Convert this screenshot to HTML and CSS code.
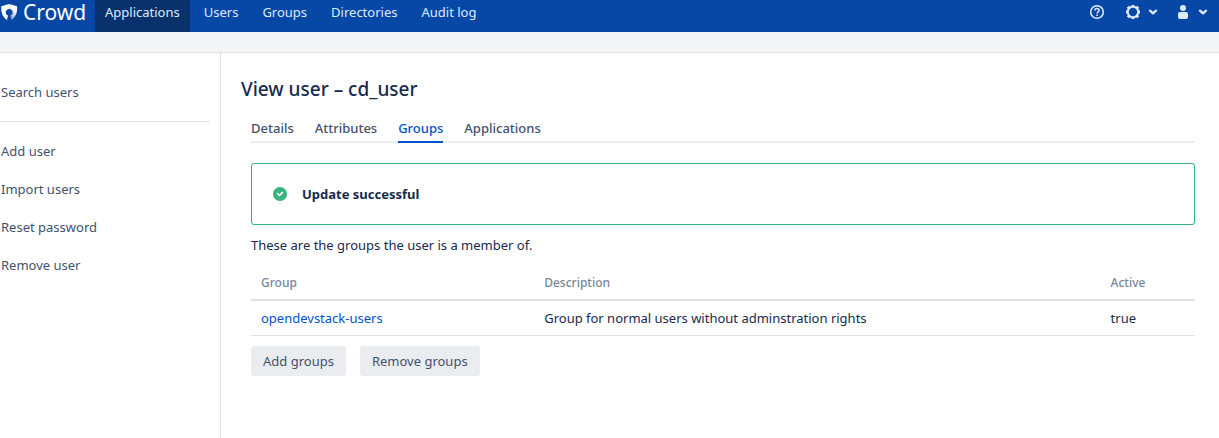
FILE: index.html
```html
<!DOCTYPE html>
<html lang="en">
<head>
<meta charset="utf-8">
<title>View user – cd_user</title>
<link rel="stylesheet" href="styles.css">
</head>
<body>
<header class="topbar">
  <a class="brand" href="#">
    <svg class="brand-icon" width="18" height="18" viewBox="0 0 18 18" aria-hidden="true">
      <defs><linearGradient id="shade" gradientUnits="userSpaceOnUse" x1="15" y1="5" x2="9" y2="14"><stop offset="0.2" stop-color="#fff"/><stop offset="1" stop-color="#7f9fd6"/></linearGradient></defs>
      <path fill="#fff" d="M9.200 1 1.300 3.300C.9 9 2.200 14 7 17L8 12.400C6.600 12.100 5.700 10.900 5.700 9.400 5.700 7.500 7.200 5.900 9.200 5.900Z"/>
      <path fill="url(#shade)" d="M9.200 1l7.900 2.300C17.500 9 16.200 14 11.400 17L10.400 12.400C11.800 12.100 12.700 10.900 12.700 9.400 12.700 7.500 11.200 5.900 9.200 5.900Z"/>
    </svg>
    <span>Crowd</span>
  </a>
  <nav class="mainnav">
    <a class="current" href="#">Applications</a>
    <a href="#">Users</a>
    <a href="#">Groups</a>
    <a href="#">Directories</a>
    <a href="#">Audit log</a>
  </nav>
  <div class="tools">
    <button class="help" type="button" aria-label="Help">
      <svg width="16" height="16" viewBox="0 0 16 16"><circle cx="8" cy="8" r="6.300" fill="none" stroke="currentColor" stroke-width="1.600"/><path d="M5.900 6.600C5.900 5.300 6.800 4.600 8 4.600s2.100.7 2.100 1.800c0 1.400-2 1.500-2 3" fill="none" stroke="currentColor" stroke-width="1.500"/><circle cx="8.100" cy="11.200" r=".9" fill="currentColor"/></svg>
    </button>
    <button type="button" aria-label="Administration">
      <svg width="16" height="16" viewBox="0 0 16 16"><circle cx="8" cy="8" r="5.200" fill="none" stroke="currentColor" stroke-width="2"/><g stroke="currentColor" stroke-width="3"><path d="M8 1v2M8 13v2M1 8h2M13 8h2M2.800 2.800l1.700 1.700M11.500 11.500l1.700 1.700M13.200 2.800l-1.700 1.700M4.500 11.500l-1.700 1.700"/></g></svg>
      <svg width="10" height="8" viewBox="0 0 10 8"><path d="M2 2.700 5 5.300l3-2.600" fill="none" stroke="currentColor" stroke-width="2.400" stroke-linecap="round" stroke-linejoin="round"/></svg>
    </button>
    <button type="button" aria-label="Profile">
      <svg width="16" height="16" viewBox="0 0 16 16"><circle cx="8" cy="4" r="3" fill="currentColor"/><path d="M3 10q0-2 2-2h6q2 0 2 2v3q0 2-2 2H5q-2 0-2-2Z" fill="currentColor"/></svg>
      <svg width="10" height="8" viewBox="0 0 10 8"><path d="M2 2.700 5 5.300l3-2.600" fill="none" stroke="currentColor" stroke-width="2.400" stroke-linecap="round" stroke-linejoin="round"/></svg>
    </button>
  </div>
</header>
<div class="band"></div>
<div class="layout">
  <nav class="sidebar">
    <a href="#">Search users</a>
    <hr>
    <a href="#">Add user</a>
    <a href="#">Import users</a>
    <a href="#">Reset password</a>
    <a href="#">Remove user</a>
  </nav>
  <main class="content">
    <h1>View user – cd_user</h1>
    <div class="panel">
      <nav class="tabs">
        <a href="#">Details</a>
        <a href="#">Attributes</a>
        <a class="active" href="#">Groups</a>
        <a href="#">Applications</a>
      </nav>
      <div class="message" role="status">
        <svg width="14" height="14" viewBox="0 0 14 14" aria-hidden="true"><circle cx="7" cy="7" r="7" fill="#36b37e"/><path d="M4.600 6.700 6.500 8.500 9.500 5.300" fill="none" stroke="#fff" stroke-width="1.700" stroke-linecap="round" stroke-linejoin="round"/></svg>
        <strong>Update successful</strong>
      </div>
      <p>These are the groups the user is a member of.</p>
      <table>
        <thead><tr><th class="col-group">Group</th><th class="col-description">Description</th><th>Active</th></tr></thead>
        <tbody><tr><td><a href="#">opendevstack-users</a></td><td>Group for normal users without adminstration rights</td><td>true</td></tr></tbody>
      </table>
      <div class="actions">
        <button type="button">Add groups</button>
        <button type="button">Remove groups</button>
      </div>
    </div>
  </main>
</div>
</body>
</html>
```
FILE: styles.css
```css
* { box-sizing: border-box; }
body {
  display: flex;
  flex-direction: column;
  min-height: 100vh;
  margin: 0;
  background: #fff;
  color: #172b4d;
  font: 13px/20px "Noto Sans", "Open Sans", sans-serif;
}
a { color: #0052cc; text-decoration: none; }
button { font: inherit; border: 0; }

.topbar {
  display: flex;
  height: 32px;
  padding-right: 11px;
  background: #0747a6;
}
.topbar a { color: #deebff; }
.topbar .brand {
  display: flex;
  align-items: center;
  gap: 5px;
  width: 95px;
  padding-bottom: 8px;
  color: #fff;
  font-size: 21px;
}
.brand-icon { flex: none; }
.mainnav { display: flex; gap: 4px; }
.mainnav a { padding: 2px 10px; }
.mainnav .current { background: #09326c; }
.tools {
  display: flex;
  align-items: flex-start;
  gap: 17px;
  margin-left: auto;
}
.tools button {
  display: flex;
  align-items: center;
  gap: 7px;
  height: 24px;
  padding: 0;
  background: none;
  color: #deebff;
}
.tools .help { margin-right: 3px; }

.band { height: 21px; background: #f4f5f7; border-bottom: 1px solid #dfe1e6; }

.layout { display: flex; flex: 1; }
.sidebar {
  width: 221px;
  padding: 20px 10px 0 0;
  border-right: 1px solid #dfe1e6;
}
.sidebar a { display: block; padding: 9px 1px; color: #42526e; }
.sidebar hr { margin: 10px 0; border: 0; border-top: 1px solid #dfe1e6; }

.content { flex: 1; padding: 24px 24px 20px 20px; }
h1 { margin: 0; font-size: 19px; line-height: 24px; font-weight: 500; }
.panel { padding-left: 10px; }
.tabs {
  display: flex;
  gap: 21px;
  margin-top: 17px;
  border-bottom: 2px solid #ebecf0;
}
.tabs a {
  margin-bottom: -2px;
  padding-bottom: 3px;
  border-bottom: 2px solid transparent;
  color: #42526e;
  font-weight: 500;
}
.tabs .active { color: #0052cc; border-color: #0052cc; }
.message {
  display: flex;
  align-items: center;
  gap: 15px;
  margin-top: 20px;
  padding: 20px 21px;
  border: 1px solid #36b37e;
  border-radius: 3px;
}
p { margin: 10px 0; }
table { width: 100%; border-collapse: collapse; }
th, td { padding: 7px 10px; text-align: left; }
th {
  padding: 8px 10px 6px;
  border-bottom: 2px solid #dfe1e6;
  color: #7a869a;
  font-size: 12px;
  font-weight: 500;
}
td { border-bottom: 1px solid #dfe1e6; }
.col-group { width: 30%; }
.col-description { width: 60%; }
.actions { display: flex; gap: 14px; margin-top: 10px; }
.actions button {
  height: 30px;
  padding: 0 12px;
  border-radius: 3px;
  background: #ebecf0;
  color: #42526e;
}
```
